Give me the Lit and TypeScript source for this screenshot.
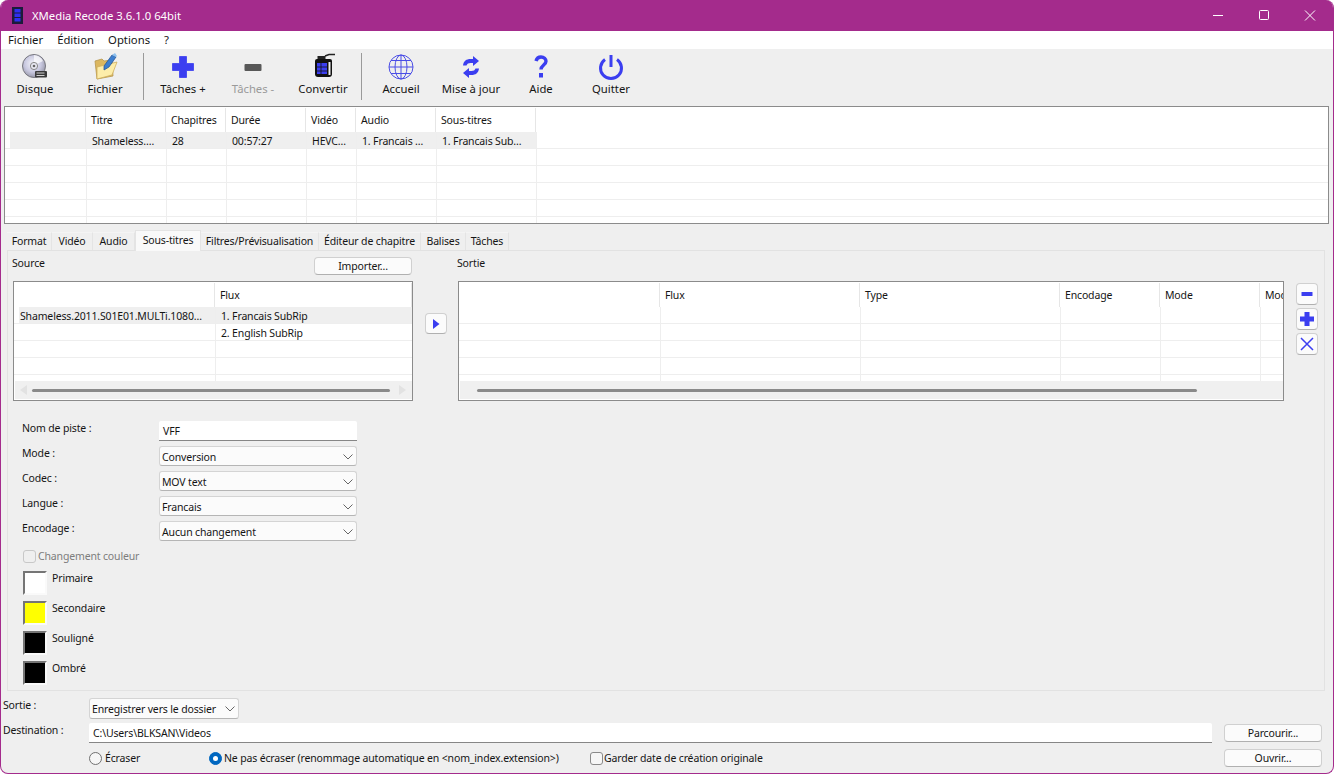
import { LitElement, html, css, svg, nothing } from "lit";
import { customElement } from "lit/decorators.js";

const BLUE = "#3b3ef0";

const icons: Record<string, unknown> = {
  disc: svg`<svg width="32" height="32" viewBox="0 0 32 32"><defs><radialGradient id="dg" cx="45%" cy="40%" r="65%"><stop offset="0" stop-color="#f4f4fa"/><stop offset=".55" stop-color="#c9c9e0"/><stop offset="1" stop-color="#8f8f9f"/></radialGradient></defs><circle cx="15" cy="15" r="11.500" fill="url(#dg)" stroke="#77777f"/><path d="M15 4a11 11 0 0 1 9 6l-6 3a4 4 0 0 0-3-1z" fill="#fff" opacity=".7"/><circle cx="15" cy="15" r="3.600" fill="#e8e8f2" stroke="#888"/><circle cx="15" cy="15" r="1.300" fill="#666"/><rect x="16" y="20" width="12" height="6.500" rx="1" fill="#3a3a3a"/><path d="M17.500 22h8M17.500 24.500h8" stroke="#cfcfcf" stroke-width="1"/></svg>`,
  folder: svg`<svg width="32" height="32" viewBox="0 0 32 32"><path d="M6 10l7-2 2 2 8-1 1 16-16 3z" fill="#dcb75f" stroke="#b5974f" stroke-width=".8"/><path d="M8 16l20-5-5 13-15 4z" fill="#fdedaa" stroke="#cfae5c" stroke-width=".8"/><path d="M15 15 23 4l4 2-7 10-5 3z" fill="#3c7fd0" stroke="#234f8c" stroke-width=".7"/><path d="M23 4l3-2 2 3-1 1z" fill="#8cc0ef"/></svg>`,
  plus: svg`<svg width="32" height="32" viewBox="0 0 32 32"><path d="M12.500 5.500h7v7H26.500v7h-7v7h-7v-7H5.500v-7h7z" fill="${BLUE}" stroke="${BLUE}" stroke-width=".8" stroke-linejoin="round"/></svg>`,
  minus: svg`<svg width="32" height="32" viewBox="0 0 32 32"><rect x="7.500" y="13" width="17" height="7" rx="1" fill="#585858"/></svg>`,
  convert: svg`<svg width="32" height="32" viewBox="0 0 32 32"><path d="M10 8h13a2 2 0 0 1 2 2v13a3 3 0 0 1-3 3H11a3 3 0 0 1-3-3V10a2 2 0 0 1 2-2z" fill="#111"/><rect x="10.500" y="5" width="8" height="3" fill="#222"/><path d="M18 5l4-1.500h6" stroke="#222" stroke-width="1.600" fill="none"/><rect x="10" y="12" width="10" height="11" fill="${BLUE}"/><path d="M10 16h10M10 20h10M14 12v11" stroke="#111" stroke-width=".8"/><path d="M21.500 11h2v13h-2z" fill="#eee"/></svg>`,
  globe: svg`<svg width="32" height="32" viewBox="0 0 32 32" fill="none" stroke="#4a4de6" stroke-width="1"><circle cx="16" cy="16" r="12"/><ellipse cx="16" cy="16" rx="6" ry="12"/><path d="M16 4v24M4 16h24M6 9.500h20M6 22.500h20"/></svg>`,
  refresh: svg`<svg width="32" height="32" viewBox="0 0 32 32" fill="${BLUE}"><path d="M8 14.500c.5-4.500 3.500-6.500 7.500-6.500h2.500V5l6 5-6 5v-3h-2.500c-2 0-3.500 .8-4 2.500z"/><path d="M24 17.500c-.5 4.500-3.500 6.500-7.500 6.500H14v3l-6-5 6-5v3h2.500c2 0 3.500-.8 4-2.500z"/></svg>`,
  help: svg`<svg width="32" height="32" viewBox="0 0 32 32" fill="none" stroke="${BLUE}"><path d="M11 10c.8-3 2.700-4 5-4 3 0 5 1.800 5 4.200 0 3.800-5 3.800-5 8.300" stroke-width="3.400"/><rect x="14" y="22" width="4" height="4.500" fill="${BLUE}" stroke="none"/></svg>`,
  power: svg`<svg width="32" height="32" viewBox="0 0 32 32" fill="none" stroke="${BLUE}" stroke-width="3"><path d="M10 8.500a10.500 10.500 0 1 0 12 0"/><path d="M16 4v12"/></svg>`,
};

const tools: ({ label: string; icon: string; off?: boolean } | null)[] = [
  { label: "Disque", icon: "disc" },
  { label: "Fichier", icon: "folder" },
  null,
  { label: "Tâches +", icon: "plus" },
  { label: "Tâches -", icon: "minus", off: true },
  { label: "Convertir", icon: "convert" },
  null,
  { label: "Accueil", icon: "globe" },
  { label: "Mise à jour", icon: "refresh" },
  { label: "Aide", icon: "help" },
  { label: "Quitter", icon: "power" },
];

const tabs = [
  ["Format", 45], ["Vidéo", 41], ["Audio", 42], ["Sous-titres", 66],
  ["Filtres/Prévisualisation", 118], ["Éditeur de chapitre", 102], ["Balises", 45], ["Tâches", 43],
] as [string, number][];

interface Tbl { widths: number[]; heads: string[]; rows: string[][]; sel?: number; lines: number; gutter: number; scroll?: "src" | "out"; }

const mainTbl: Tbl = {
  widths: [81, 80, 60, 80, 50, 80, 100],
  heads: ["", "Titre", "Chapitres", "Durée", "Vidéo", "Audio", "Sous-titres"],
  rows: [["", "Shameless.…", "28", "00:57:27", "HEVC…", "1. Francais …", "1. Francais Sub…"]],
  sel: 0, lines: 6, gutter: 5,
};
const srcTbl: Tbl = {
  widths: [201, 197],
  heads: ["", "Flux"],
  rows: [["Shameless.2011.S01E01.MULTi.1080…", "1. Francais SubRip"], ["", "2. English SubRip"]],
  sel: 0, lines: 5, gutter: 5, scroll: "src",
};
const outTbl: Tbl = {
  widths: [201, 200, 200, 100, 100, 100],
  heads: ["", "Flux", "Type", "Encodage", "Mode", "Mode"],
  rows: [], lines: 5, gutter: 0, scroll: "out",
};

const fields = [
  ["Mode :", "Conversion"], ["Codec :", "MOV text"], ["Langue :", "Francais"], ["Encodage :", "Aucun changement"],
];
const swatches = [["Primaire", "#ffffff"], ["Secondaire", "#ffff00"], ["Souligné", "#000000"], ["Ombré", "#000000"]];

const chevron = html`<svg class="chev" width="10" height="6" viewBox="0 0 10 6" fill="none" stroke="#666"><path d="M.5.500 5 5 9.500.500"/></svg>`;

@customElement("app-root")
export class AppRoot extends LitElement {
  static styles = css`
    :host { display: block; width: 1334px; height: 774px; background: #fff; overflow: hidden;
      font: 10.5px/14px "Noto Sans", "Open Sans", sans-serif; letter-spacing: -0.15px; color: #151515; }
    * { box-sizing: border-box; }
    .win { width: 1334px; height: 774px; display: flex; flex-direction: column; background: #efefef;
      border: 1px solid #a42b8c; border-top: 0; border-radius: 8px; overflow: hidden; }
    .title { height: 31px; flex: none; background: #a42b8c; color: #fff; display: flex; align-items: center; padding-left: 11px; font-size: 11.300px; letter-spacing: 0; }
    .title .logo { margin-right: 9px; }
    .wc { margin-left: auto; display: flex; }
    .wc svg { width: 46px; height: 31px; display: block; }
    .menu { height: 18px; flex: none; background: #fff; display: flex; align-items: center; padding-left: 7px; gap: 14px; font-size: 11.300px; letter-spacing: 0; }
    .toolbar { height: 57px; flex: none; display: flex; padding-top: 2px; margin-left: -1px; font-size: 11.300px; letter-spacing: 0; }
    .tool { width: 70px; height: 50px; display: flex; flex-direction: column; align-items: center; }
    .tool svg { display: block; flex: none; height: 32px; }
    .tool span { line-height: 14px; margin-top: -1px; white-space: nowrap; }
    .tool.off span { color: #9a9a9a; }
    .sep { width: 1px; height: 47px; background: #9a9a9a; margin: 2px 4px 0 3px; flex: none; }
    .tbl { background: #fff; border: 1px solid #8b8b8b; padding: 1px 0 0; display: flex; flex-direction: column; overflow: hidden; position: relative; }
    .main { margin: 0 4px 0 3px; height: 118px; flex: none; }
    .hrow { height: 24px; display: flex; flex: none; }
    .hcell { flex: none; border-right: 1px solid #e6e6e6; padding: 5px 0 0 5px; white-space: nowrap; overflow: hidden; }
    .body { flex: 1; min-height: 0; overflow: hidden; }
    .row { height: 17px; display: flex; border-bottom: 1px solid #eeeeee; }
    .cell { flex: none; border-right: 1px solid #eeeeee; padding: 2px 0 0 5px; white-space: nowrap; overflow: hidden; }
    .row.sel .cell { background: #efefef; }
    .tabs { display: flex; height: 18px; margin: 8px 0 0 6px; flex: none; position: relative; z-index: 1; }
    .tab { border-right: 1px solid #e4e4e4; border-top: 1px solid #f4f4f4; padding-top: 1px; text-align: center; white-space: nowrap; }
    .tab.on { background: #f9f9f9; border: 1px solid #e4e4e4; border-bottom: 0; height: 21px; margin-top: -2px; padding-top: 2px; }
    .pane { margin: 0 8px 0 6px; height: 441px; flex: none; border: 1px solid #e2e2e2; padding-left: 5px; }
    .subs { display: grid; grid-template-columns: 400px 45px 826px 12px 21px; grid-template-rows: 30px 120px; }
    .srchead { display: flex; align-items: flex-start; padding-top: 5px; margin-left: -1px; }
    .btn { background: #fbfbfb; border: 1px solid #d0d0d0; border-bottom-color: #b0b0b0; border-radius: 4px; text-align: center; display: flex; align-items: center; justify-content: center; }
    .imp { width: 98px; height: 18px; margin: 1px 1px 0 auto; }
    .gap { display: flex; justify-content: center; padding: 32px 0 0 0; }
    .arrow { width: 22px; height: 21px; }
    .scroll { height: 18px; flex: none; background: #f0f0f0; margin: 0 0 1px 1px; position: relative; }
    .thumb { position: absolute; top: 8px; height: 3px; background: #8a8a8a; border-radius: 2px; }
    .tri { position: absolute; top: 4px; }
    .side { display: flex; flex-direction: column; gap: 3px; padding-top: 2px; }
    .side .btn { width: 22px; height: 22px; }
    .form { display: grid; grid-template-columns: 137px 198px; grid-auto-rows: 20px; row-gap: 5px; margin: 20px 0 0 9px; }
    .lbl { white-space: nowrap; }
    .edit { background: #fff; border-bottom: 1px solid #868686; padding: 3px 0 0 4px; border-radius: 2px 2px 0 0; }
    .combo { background: #fbfbfb; border: 1px solid #d4d4d4; border-bottom-color: #b5b5b5; border-radius: 3px; display: flex; align-items: center; padding: 1px 0 0 2px; white-space: nowrap; }
    .chev { margin-left: auto; margin-right: 3px; flex: none; }
    .chk { display: flex; align-items: center; margin: 8px 0 0 10px; height: 14px; gap: 2px; color: #7d7d7d; }
    .box { width: 13px; height: 13px; border: 1px solid #8a8a8a; border-radius: 3px; background: #f6f6f6; flex: none; }
    .box.dis { border-color: #c8c8c8; background: #efefef; }
    .swatches { display: flex; flex-direction: column; gap: 6px; margin: 8px 0 0 10px; }
    .sw { display: flex; gap: 5px; }
    .chip { width: 24px; height: 24px; border: 2px solid; border-color: #757575 #fafafa #fafafa #757575; flex: none; }
    .foot { flex: 1; padding: 7px 11px 0 2px; }
    .fr { display: flex; align-items: flex-start; }
    .fl { width: 86px; flex: none; white-space: nowrap; }
    .out { width: 150px; height: 21px; }
    .fr.two { margin-top: 4px; height: 21px; }
    .dest { width: 1123px; height: 20px; }
    .pick { width: 98px; height: 18px; margin: 1px 0 0 12px; }
    .fr.three { margin-top: 4px; height: 19px; }
    .opt { display: flex; align-items: center; height: 18px; margin-top: 1px; gap: 3px; white-space: nowrap; }
    .rad { width: 13px; height: 13px; border: 1px solid #707070; border-radius: 50%; background: #f6f6f6; flex: none; }
    .rad.on { background: #0067c0; border-color: #0067c0; position: relative; }
    .rad.on::after { content: ""; position: absolute; inset: 3px; background: #fff; border-radius: 50%; }
    .o1 { width: 120px; }
    .o2 { width: 381px; gap: 2px; }
    .o3 { gap: 1px; }
    .spacer { flex: 1; }
  `;

  private table(t: Tbl, cls: string) {
    return html`<div class="tbl ${cls}">
      <div class="hrow">${t.heads.map((h, i) => html`<div class="hcell" style="width:${t.widths[i]}px">${h}</div>`)}</div>
      <div class="body">
        ${Array.from({ length: t.lines }, (_, r) => {
          const row = t.rows[r];
          return html`<div class="row ${t.sel === r ? "sel" : ""}">
            ${t.widths.map((w, i) => html`<div class="cell" style="width:${i === 0 ? w + 1 - t.gutter : w}px;${i === 0 ? `margin-left:${t.gutter}px;padding-left:1px;` : ""}">${row ? row[i] : ""}</div>`)}
          </div>`;
        })}
      </div>
      ${t.scroll === "src" ? html`<div class="scroll">
          <svg class="tri" style="left:5px" width="8" height="10" viewBox="0 0 8 10"><path d="M7 0v10L0 5z" fill="#e2e2e2"/></svg>
          <div class="thumb" style="left:17px;width:358px"></div>
          <svg class="tri" style="right:5px" width="8" height="10" viewBox="0 0 8 10"><path d="M0 0v10l7-5z" fill="#e2e2e2"/></svg></div>` : nothing}
      ${t.scroll === "out" ? html`<div class="scroll"><div class="thumb" style="left:17px;width:720px"></div></div>` : nothing}
    </div>`;
  }

  render() {
    return html`<div class="win">
      <div class="title">
        <svg class="logo" width="11" height="17" viewBox="0 0 11 17"><rect width="11" height="17" fill="#1c1c3a"/><rect x="2.500" y="2" width="6" height="3.500" fill="#2f2ff0"/><rect x="2.500" y="6.500" width="6" height="3.500" fill="#2f2ff0"/><rect x="2.500" y="11" width="6" height="3.500" fill="#2f2ff0"/></svg>
        XMedia Recode 3.6.1.0 64bit
        <div class="wc">
          <svg viewBox="0 0 46 31" fill="none" stroke="#fff"><path d="M18 15.500h10"/></svg>
          <svg viewBox="0 0 46 31" fill="none" stroke="#fff"><rect x="18.500" y="10.500" width="9" height="9" rx="1"/></svg>
          <svg viewBox="0 0 46 31" fill="none" stroke="#fff"><path d="M18 10.500l10 10M28 10.500l-10 10"/></svg>
        </div>
      </div>
      <div class="menu"><span>Fichier</span><span>Édition</span><span>Options</span><span>?</span></div>
      <div class="toolbar">
        ${tools.map((t) => t ? html`<div class="tool ${t.off ? "off" : ""}">${icons[t.icon]}<span>${t.label}</span></div>` : html`<div class="sep"></div>`)}
      </div>
      ${this.table(mainTbl, "main")}
      <div class="tabs">${tabs.map(([n, w]) => html`<div class="tab ${n === "Sous-titres" ? "on" : ""}" style="width:${w}px">${n}</div>`)}</div>
      <div class="pane">
        <div class="subs">
          <div class="srchead"><span>Source</span><div class="btn imp">Importer...</div></div>
          <div></div>
          <div class="srchead"><span>Sortie</span></div>
          <div></div><div></div>
          ${this.table(srcTbl, "")}
          <div class="gap"><div class="btn arrow"><svg width="8" height="10" viewBox="0 0 8 10"><path d="M1 0v10l6.500-5z" fill="${BLUE}"/></svg></div></div>
          ${this.table(outTbl, "")}
          <div></div>
          <div class="side">
            <div class="btn"><svg width="14" height="14" viewBox="0 0 14 14"><rect x="1.500" y="5" width="11" height="4" rx=".5" fill="${BLUE}"/></svg></div>
            <div class="btn"><svg width="16" height="16" viewBox="0 0 16 16"><path d="M5.500 1h5v4.500H15v5h-4.500V15h-5v-4.500H1v-5h4.500z" fill="${BLUE}"/></svg></div>
            <div class="btn"><svg width="16" height="16" viewBox="0 0 16 16"><path d="M2 2l12 12M14 2 2 14" stroke="${BLUE}" stroke-width="1.500"/></svg></div>
          </div>
        </div>
        <div class="form">
          <div class="lbl">Nom de piste :</div><div class="edit">VFF</div>
          ${fields.map(([l, v]) => html`<div class="lbl">${l}</div><div class="combo">${v}${chevron}</div>`)}
        </div>
        <div class="chk"><span class="box dis"></span>Changement couleur</div>
        <div class="swatches">
          ${swatches.map(([l, c]) => html`<div class="sw"><div class="chip" style="background:${c}"></div><div>${l}</div></div>`)}
        </div>
      </div>
      <div class="foot">
        <div class="fr"><div class="fl">Sortie :</div><div class="combo out">Enregistrer vers le dossier${chevron}</div></div>
        <div class="fr two"><div class="fl">Destination :</div><div class="edit dest">C:\\Users\\BLKSAN\\Videos</div><div class="btn pick">Parcourir...</div></div>
        <div class="fr three">
          <div class="fl"></div>
          <div class="opt o1"><span class="rad"></span>Écraser</div>
          <div class="opt o2"><span class="rad on"></span>Ne pas écraser (renommage automatique en &lt;nom_index.extension&gt;)</div>
          <div class="opt o3"><span class="box"></span>Garder date de création originale</div>
          <div class="spacer"></div>
          <div class="btn pick">Ouvrir...</div>
        </div>
      </div>
    </div>`;
  }
}
